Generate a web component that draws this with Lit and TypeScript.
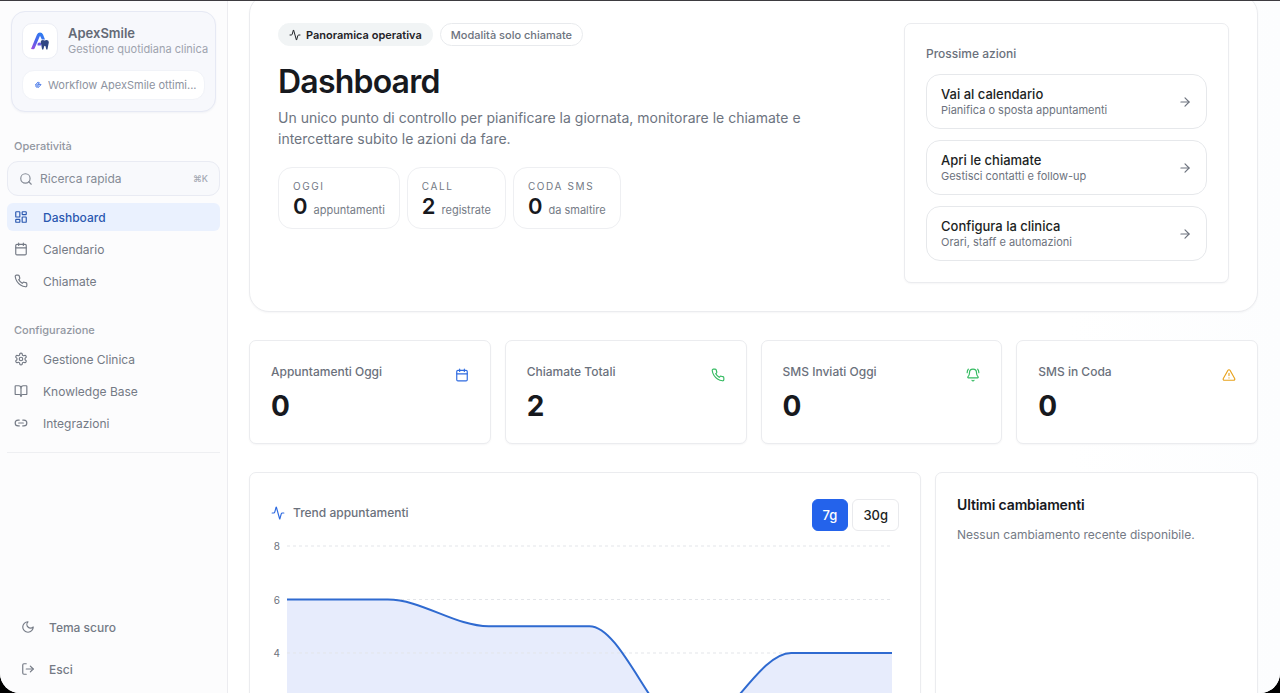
import { LitElement, html, svg, css, nothing } from "lit";
import { customElement, property, state } from "lit/decorators.js";
import { classMap } from "lit/directives/class-map.js";

const ICONS: Record<string, unknown> = {
  activity: svg`<path d="M22 12h-2.48a2 2 0 0 0-1.93 1.46l-2.35 8.36a.25.25 0 0 1-.48 0L9.24 2.18a.25.25 0 0 0-.48 0l-2.35 8.36A2 2 0 0 1 4.49 12H2"/>`,
  search: svg`<circle cx="11" cy="11" r="8"/><path d="m21 21-4.3-4.3"/>`,
  dashboard: svg`<rect width="7" height="9" x="3" y="3" rx="1"/><rect width="7" height="5" x="14" y="3" rx="1"/><rect width="7" height="9" x="14" y="12" rx="1"/><rect width="7" height="5" x="3" y="16" rx="1"/>`,
  calendar: svg`<path d="M8 2v4M16 2v4"/><rect width="18" height="18" x="3" y="4" rx="2"/><path d="M3 10h18"/>`,
  phone: svg`<path d="M22 16.92v3a2 2 0 0 1-2.18 2 19.79 19.79 0 0 1-8.63-3.07 19.5 19.5 0 0 1-6-6 19.79 19.79 0 0 1-3.07-8.67A2 2 0 0 1 4.11 2h3a2 2 0 0 1 2 1.72 12.84 12.84 0 0 0 .7 2.81 2 2 0 0 1-.45 2.11L8.09 9.91a16 16 0 0 0 6 6l1.27-1.27a2 2 0 0 1 2.11-.45 12.84 12.84 0 0 0 2.81.7A2 2 0 0 1 22 16.92z"/>`,
  settings: svg`<path d="M12.22 2h-.44a2 2 0 0 0-2 2v.18a2 2 0 0 1-1 1.73l-.43.25a2 2 0 0 1-2 0l-.15-.08a2 2 0 0 0-2.73.73l-.22.38a2 2 0 0 0 .73 2.73l.15.1a2 2 0 0 1 1 1.72v.51a2 2 0 0 1-1 1.74l-.15.09a2 2 0 0 0-.73 2.73l.22.38a2 2 0 0 0 2.73.73l.15-.08a2 2 0 0 1 2 0l.43.25a2 2 0 0 1 1 1.73V20a2 2 0 0 0 2 2h.44a2 2 0 0 0 2-2v-.18a2 2 0 0 1 1-1.73l.43-.25a2 2 0 0 1 2 0l.15.08a2 2 0 0 0 2.73-.73l.22-.39a2 2 0 0 0-.73-2.73l-.15-.08a2 2 0 0 1-1-1.74v-.5a2 2 0 0 1 1-1.74l.15-.09a2 2 0 0 0 .73-2.73l-.22-.38a2 2 0 0 0-2.73-.73l-.15.08a2 2 0 0 1-2 0l-.43-.25a2 2 0 0 1-1-1.73V4a2 2 0 0 0-2-2z"/><circle cx="12" cy="12" r="3"/>`,
  book: svg`<path d="M12 7v14"/><path d="M3 18a1 1 0 0 1-1-1V4a1 1 0 0 1 1-1h5a4 4 0 0 1 4 4 4 4 0 0 1 4-4h5a1 1 0 0 1 1 1v13a1 1 0 0 1-1 1h-6a3 3 0 0 0-3 3 3 3 0 0 0-3-3z"/>`,
  link: svg`<path d="M9 17H7A5 5 0 0 1 7 7h2"/><path d="M15 7h2a5 5 0 1 1 0 10h-2"/><path d="M8 12h8"/>`,
  moon: svg`<path d="M12 3a6 6 0 0 0 9 9 9 9 0 1 1-9-9Z"/>`,
  logout: svg`<path d="M9 21H5a2 2 0 0 1-2-2V5a2 2 0 0 1 2-2h4"/><path d="m16 17 5-5-5-5"/><path d="M21 12H9"/>`,
  arrow: svg`<path d="M5 12h14"/><path d="m12 5 7 7-7 7"/>`,
  bell: svg`<path d="M10.27 21a2 2 0 0 0 3.46 0"/><path d="M22 8c0-2.3-.8-4.3-2-6"/><path d="M3.26 15.33A1 1 0 0 0 4 17h16a1 1 0 0 0 .74-1.67C19.41 13.96 18 12.5 18 8A6 6 0 0 0 6 8c0 4.5-1.41 5.96-2.74 7.33"/><path d="M4 2C2.8 3.7 2 5.7 2 8"/>`,
  warning: svg`<path d="m21.73 18-8-14a2 2 0 0 0-3.48 0l-8 14A2 2 0 0 0 4 21h16a2 2 0 0 0 1.73-3"/><path d="M12 9v4M12 17h.01"/>`,
};

@customElement("ui-icon")
class UiIcon extends LitElement {
  @property() name = "";
  static styles = css`
    :host { display: block; flex: none; width: 14px; height: 14px; }
    svg { display: block; width: 100%; height: 100%; }
  `;
  render() {
    return html`<svg viewBox="0 0 24 24" fill="none" stroke="currentColor" stroke-width="2"
      stroke-linecap="round" stroke-linejoin="round" aria-hidden="true">${ICONS[this.name]}</svg>`;
  }
}

@customElement("app-sidebar")
class AppSidebar extends LitElement {
  static styles = css`
    * { box-sizing: border-box; }
    :host {
      box-sizing: border-box; display: flex; flex-direction: column;
      padding: 10px 7px; background: #fcfcfd; border-right: 1px solid #ececf0; color: #747a85;
    }
    .brand {
      margin: 0 4px; padding: 11px 10px; border: 1px solid #e6e9f4; border-radius: 14px;
      background: #f7f8fc; box-shadow: 0 1px 2px rgb(30 50 110 / 5%);
    }
    .brand-row { display: flex; align-items: center; gap: 10px; }
    .logo {
      width: 36px; height: 36px; flex: none; display: grid; place-items: center;
      border: 1px solid #eceef5; border-radius: 10px; background: #fff;
    }
    .logo svg { width: 20px; height: 20px; display: block; }
    .name { font-size: 13px; line-height: 16px; font-weight: 600; color: #646a76; }
    .sub { font-size: 11px; line-height: 16px; color: #9ea3ae; white-space: nowrap; }
    .pill {
      display: flex; align-items: center; gap: 6px; margin-top: 11px; padding: 0 6px 0 11px; height: 30px;
      border: 1px solid #f1f3f8; border-radius: 12px; background: #fff;
      font-size: 11px; color: #8d93a0;
    }
    .pill svg { width: 8px; height: 8px; flex: none; }
    .pill span { overflow: hidden; text-overflow: ellipsis; white-space: nowrap; }
    h2 { margin: 0; padding-left: 7px; font-size: 11px; line-height: 16px; font-weight: 500; color: #9297a1; }
    .search {
      display: flex; align-items: center; gap: 7px; width: 100%; height: 35px; margin: 7px 0; padding: 0 11px;
      border: 1px solid #e9ebf3; border-radius: 11px; background: #f8f9fc;
      font: 12px "Inter", sans-serif; color: #858b96;
    }
    .search span { flex: 1; text-align: left; }
    kbd { font: 500 9px "Inter", "DejaVu Sans", sans-serif; color: #a3a8b2; }
    nav { display: flex; flex-direction: column; gap: 4px; }
    nav a, .foot button {
      display: flex; align-items: center; gap: 15px; height: 28px; padding: 0 7px;
      border-radius: 6px; font-size: 12px; color: #747a85; text-decoration: none;
    }
    nav a.active { background: #eaf1fe; color: #2a58b0; font-weight: 500; }
    .config { margin: 27px 0 7px; }
    .nav-end { margin-top: 15px; border-top: 1px solid #eeeff2; }
    .foot { margin-top: auto; display: flex; flex-direction: column; gap: 14px; }
    .foot button { gap: 14px; border: 0; background: none; padding: 0 14px; font: 500 12px "Inter", sans-serif; cursor: pointer; }
    .ops { margin-top: 26px; }
  `;
  private links(items: string[][]) {
    return html`<nav>${items.map(([icon, label]) => html`
      <a href="#${icon}" class=${classMap({ active: icon === "dashboard" })}
        aria-current=${icon === "dashboard" ? "page" : nothing}><ui-icon name=${icon}></ui-icon>${label}</a>`)}</nav>`;
  }
  render() {
    return html`
      <div class="brand">
        <div class="brand-row">
          <div class="logo">
            <svg viewBox="0 0 20 20" aria-hidden="true">
              <defs><linearGradient id="g" x1="0" y1="1" x2="0.7" y2="0">
                <stop offset="0" stop-color="#a24be0"/><stop offset="0.5" stop-color="#4c63ea"/><stop offset="1" stop-color="#2e7df2"/>
              </linearGradient></defs>
              <path d="M1 18 7 3.4Q7.900 1.400 10 1.400Q12.200 1.400 13 3.400L15 8.600H11.800L10 4.800 4.700 17.300Q4.300 18.300 3.300 18.300Z" fill="url(#g)"/>
              <path d="M7.500 12.800Q9.200 10.600 11 12.200V14.400H7.600Z" fill="#6a57e4"/>
              <path d="M11 9.800Q12.600 8.300 14.600 9.400 16.800 8.300 18.400 9.800 19.300 11.200 18.400 13.500L17.500 18.300Q16.800 19.300 16.200 18L15.500 15.200Q14.800 14.500 14.200 15.200L13.400 18.300Q12.700 19.300 12 18L11.200 13.500Q10.300 11.200 11 9.800Z" fill="#2f4583"/>
            </svg>
          </div>
          <div><div class="name">ApexSmile</div><div class="sub">Gestione quotidiana clinica</div></div>
        </div>
        <div class="pill">
          <svg viewBox="0 0 8 8" fill="none" stroke="#5b86ea" stroke-width="1" stroke-linecap="round" aria-hidden="true">
            <path d="M3.900 1.200 1.300 3.900H3.900ZM6.800 3.900 4 6.800V4.100Z" stroke-linejoin="round"/><path d="M5.200 1.600 4.600 3.400H6.600M1.400 5H3.200L2.800 6.400"/>
          </svg>
          <span>Workflow ApexSmile ottimi...</span>
        </div>
      </div>
      <h2 class="ops">Operatività</h2>
      <button class="search"><ui-icon name="search"></ui-icon><span>Ricerca rapida</span><kbd>⌘K</kbd></button>
      ${this.links([["dashboard", "Dashboard"], ["calendar", "Calendario"], ["phone", "Chiamate"]])}
      <h2 class="config">Configurazione</h2>
      ${this.links([["settings", "Gestione Clinica"], ["book", "Knowledge Base"], ["link", "Integrazioni"]])}
      <div class="nav-end"></div>
      <div class="foot">
        <button><ui-icon name="moon"></ui-icon>Tema scuro</button>
        <button><ui-icon name="logout"></ui-icon>Esci</button>
      </div>`;
  }
}

@customElement("trend-chart")
class TrendChart extends LitElement {
  @property({ attribute: false }) values: number[] = [];
  static styles = css`
    :host { display: grid; grid-template-columns: 9px 1fr; column-gap: 7px; height: 214px; }
    .axis { display: flex; flex-direction: column; justify-content: space-between; margin: -6px 0; text-align: right; }
    .axis span { height: 12px; line-height: 12px; font-size: 10px; color: #6d727c; }
    svg { display: block; width: 100%; height: 100%; overflow: visible; }
    .grid { stroke: #e3e5e9; stroke-dasharray: 3 3; }
    .line { fill: none; stroke: #2f6ad0; stroke-width: 2; }
    .area { fill: #e7ecfc; }
    .grid, .line { vector-effect: non-scaling-stroke; }
  `;
  render() {
    const step = 600 / (this.values.length - 1);
    const y = (v: number) => (8 - v) * 25;
    const line = this.values.map((v, i) => {
      if (i === 0) return `M0 ${y(v)}`;
      const x0 = (i - 1) * step;
      return `C${x0 + step / 3} ${y(this.values[i - 1])} ${x0 + (step * 2) / 3} ${y(v)} ${i * step} ${y(v)}`;
    }).join("");
    return html`
      <div class="axis">${[8, 6, 4, 2, 0].map((n) => html`<span>${n}</span>`)}</div>
      <svg viewBox="0 0 600 200" preserveAspectRatio="none" role="img" aria-label="Trend appuntamenti">
        <path class="area" d="${line}V200H0Z"/>
        ${[0, 50, 100, 150, 200].map((g) => svg`<path class="grid" d="M0 ${g}H600"/>`)}
        <path class="line" d=${line}/>
      </svg>`;
  }
}

@customElement("app-root")
class AppRoot extends LitElement {
  @state() private range = "7g";
  static styles = css`
    * { box-sizing: border-box; }
    :host { display: block; height: 100vh; background: #000; font-family: "Inter", sans-serif; color: #17191e; }
    .window {
      display: grid; grid-template-columns: 228px minmax(0, 1fr); height: 100%; overflow: hidden;
      border-top: 1px solid #3d3b40; border-radius: 0 0 20px 20px; background: #fff;
    }
    main {
      overflow: hidden; padding: 0 22px 0 21px; display: flex; flex-direction: column; gap: 28px;
      background: linear-gradient(90deg, #fff 80%, #fcfdfe);
    }
    main > * { flex: none; }
    .card { background: #fff; border: 1px solid #ebecef; border-radius: 7px; box-shadow: 0 1px 2px rgb(20 30 60 / 4%); }
    .hero {
      margin-top: -7px; padding: 28px; border-radius: 20px;
      display: grid; grid-template-columns: minmax(0, 1fr) 325px; gap: 28px;
    }
    .badges { display: flex; gap: 7px; }
    .badge {
      display: flex; align-items: center; gap: 5px; height: 23px; padding: 0 10px;
      border: 1px solid #e8eaed; border-radius: 12px; font-size: 11px; font-weight: 500; color: #6d737e;
    }
    .badge.solid { background: #f1f4f5; border-color: #f1f4f5; color: #1f2227; font-weight: 600; }
    .badge ui-icon { width: 12px; height: 12px; }
    h1 { margin: 16px 0 0; font-size: 32px; line-height: 40px; font-weight: 600; letter-spacing: -0.025em; }
    .lead { margin: 5px 0 0; max-width: 580px; font-size: 14px; line-height: 21px; color: #6d747f; }
    .chips { display: flex; gap: 7px; margin-top: 18px; }
    .chip { height: 62px; padding: 10px 14px; border: 1px solid #eeeff2; border-radius: 14px; }
    .chip-label { font-size: 10px; line-height: 16px; letter-spacing: 0.16em; text-transform: uppercase; color: #737985; }
    .chip-value { display: flex; align-items: baseline; gap: 6px; font-size: 11px; line-height: 24px; color: #757b86; }
    .chip-value strong { font-size: 22px; font-weight: 600; color: #17191e; }
    .next { padding: 21px; display: flex; flex-direction: column; gap: 11px; }
    .label { margin: 0; font-size: 12px; line-height: 18px; font-weight: 500; color: #6b717c; }
    .action {
      display: flex; align-items: center; justify-content: space-between; height: 55px; padding: 0 14px;
      border: 1px solid #e6e8eb; border-radius: 14px; color: #6d737e; text-decoration: none;
    }
    .action strong { display: block; font-size: 13px; line-height: 16px; font-weight: 500; color: #1c1f24; }
    .action small { display: block; font-size: 11px; line-height: 16px; }
    .stats { display: grid; grid-template-columns: repeat(4, minmax(0, 1fr)); gap: 14px; }
    .stat { display: flex; justify-content: space-between; height: 104px; padding: 22px 21px; }
    .stat strong { display: block; margin-top: 8px; font-size: 28px; line-height: 34px; font-weight: 700; }
    .stat ui-icon { margin-top: 5px; }
    .blue { color: #2f6be0; }
    .green { color: #35bb62; }
    .amber { color: #e8a21c; }
    .bottom { display: grid; grid-template-columns: minmax(0, 1fr) 323px; gap: 14px; }
    .trend { padding: 26px 28px 28px 21px; }
    .trend-head { display: flex; justify-content: space-between; margin: 0 -7px 15px 0; }
    .trend-title { display: flex; align-items: center; gap: 8px; height: 28px; }
    .range { display: flex; gap: 4px; }
    .range button {
      height: 32px; padding: 0 10px; border: 1px solid #e9eaed; border-radius: 6px; background: #fff;
      font: 500 13px "Inter", sans-serif; color: #1c1f24; cursor: pointer;
    }
    .range button.on { background: #2463eb; border-color: #2463eb; color: #fff; }
    .changes { padding: 21px; }
    .changes h2 { margin: 0; font-size: 14px; line-height: 22px; font-weight: 600; letter-spacing: -0.01em; }
    .changes p { margin: 10px 0 0; font-size: 12px; line-height: 18px; color: #747a85; }
  `;
  render() {
    const chips = [["Oggi", "0", "appuntamenti"], ["Call", "2", "registrate"], ["Coda SMS", "0", "da smaltire"]];
    const actions = [
      ["Vai al calendario", "Pianifica o sposta appuntamenti"],
      ["Apri le chiamate", "Gestisci contatti e follow-up"],
      ["Configura la clinica", "Orari, staff e automazioni"],
    ];
    const stats = [
      ["Appuntamenti Oggi", "0", "calendar", "blue"],
      ["Chiamate Totali", "2", "phone", "green"],
      ["SMS Inviati Oggi", "0", "bell", "green"],
      ["SMS in Coda", "0", "warning", "amber"],
    ];
    return html`
      <div class="window">
        <app-sidebar></app-sidebar>
        <main>
          <section class="card hero">
            <div>
              <div class="badges">
                <span class="badge solid"><ui-icon name="activity"></ui-icon>Panoramica operativa</span>
                <span class="badge">Modalità solo chiamate</span>
              </div>
              <h1>Dashboard</h1>
              <p class="lead">Un unico punto di controllo per pianificare la giornata, monitorare le chiamate e intercettare subito le azioni da fare.</p>
              <div class="chips">${chips.map(([label, n, unit]) => html`
                <div class="chip">
                  <div class="chip-label">${label}</div>
                  <div class="chip-value"><strong>${n}</strong>${unit}</div>
                </div>`)}</div>
            </div>
            <div class="card next">
              <h2 class="label">Prossime azioni</h2>
              ${actions.map(([title, sub]) => html`
                <a class="action" href="#azioni">
                  <span><strong>${title}</strong><small>${sub}</small></span>
                  <ui-icon name="arrow"></ui-icon>
                </a>`)}
            </div>
          </section>
          <section class="stats">${stats.map(([label, n, icon, tone]) => html`
            <div class="card stat">
              <div><h2 class="label">${label}</h2><strong>${n}</strong></div>
              <ui-icon class=${tone} name=${icon}></ui-icon>
            </div>`)}</section>
          <section class="bottom">
            <div class="card trend">
              <div class="trend-head">
                <div class="trend-title"><ui-icon class="blue" name="activity"></ui-icon><h2 class="label">Trend appuntamenti</h2></div>
                <div class="range">${["7g", "30g"].map((r) => html`
                  <button class=${classMap({ on: r === this.range })} @click=${() => (this.range = r)}>${r}</button>`)}</div>
              </div>
              <trend-chart .values=${[6, 6, 5, 5, 1, 4, 4]}></trend-chart>
            </div>
            <div class="card changes">
              <h2>Ultimi cambiamenti</h2>
              <p>Nessun cambiamento recente disponibile.</p>
            </div>
          </section>
        </main>
      </div>`;
  }
}
